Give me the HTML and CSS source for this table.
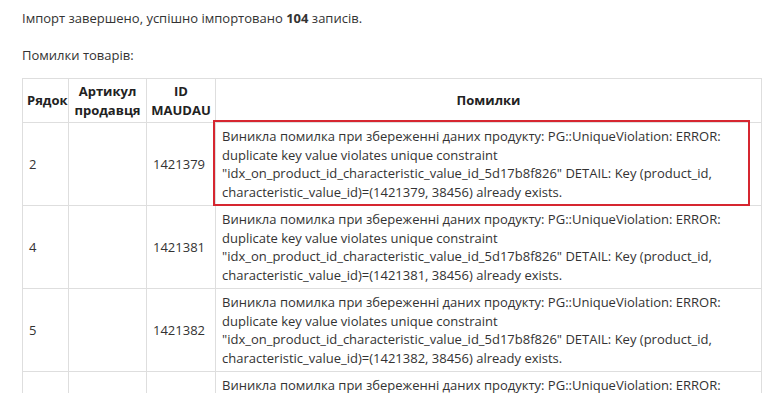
FILE: index.html
```html
<!DOCTYPE html>
<html lang="uk">
<head>
<meta charset="utf-8">
<title>Імпорт</title>
<link rel="stylesheet" href="styles.css">
</head>
<body>
<div class="page">
  <p class="summary">Імпорт завершено, успішно імпортовано <b>104</b> записів.</p>
  <p class="subtitle">Помилки товарів:</p>
  <table class="errors">
    <colgroup>
      <col class="c-row">
      <col class="c-sku">
      <col class="c-id">
      <col class="c-msg">
    </colgroup>
    <thead>
      <tr>
        <th>Рядок</th>
        <th>Артикул продавця</th>
        <th>ID MAUDAU</th>
        <th>Помилки</th>
      </tr>
    </thead>
    <tbody>
      <tr>
        <td>2</td>
        <td></td>
        <td>1421379</td>
        <td class="msg highlighted">Виникла помилка при збереженні даних продукту: PG::UniqueViolation: ERROR: duplicate key value violates unique constraint "idx_on_product_id_characteristic_value_id_5d17b8f826" DETAIL: Key (product_id, characteristic_value_id)=(1421379, 38456) already exists.<span class="mark"></span></td>
      </tr>
      <tr>
        <td>4</td>
        <td></td>
        <td>1421381</td>
        <td class="msg">Виникла помилка при збереженні даних продукту: PG::UniqueViolation: ERROR: duplicate key value violates unique constraint "idx_on_product_id_characteristic_value_id_5d17b8f826" DETAIL: Key (product_id, characteristic_value_id)=(1421381, 38456) already exists.</td>
      </tr>
      <tr>
        <td>5</td>
        <td></td>
        <td>1421382</td>
        <td class="msg">Виникла помилка при збереженні даних продукту: PG::UniqueViolation: ERROR: duplicate key value violates unique constraint "idx_on_product_id_characteristic_value_id_5d17b8f826" DETAIL: Key (product_id, characteristic_value_id)=(1421382, 38456) already exists.</td>
      </tr>
      <tr>
        <td>6</td>
        <td></td>
        <td>1421383</td>
        <td class="msg">Виникла помилка при збереженні даних продукту: PG::UniqueViolation: ERROR: duplicate key value violates unique constraint "idx_on_product_id_characteristic_value_id_5d17b8f826" DETAIL: Key (product_id, characteristic_value_id)=(1421383, 38456) already exists.</td>
      </tr>
    </tbody>
  </table>
</div>
</body>
</html>
```

FILE: styles.css
```css
html, body {
  margin: 0;
  padding: 0;
  background: #ffffff;
}

body {
  font-family: "Open Sans", "Noto Sans", sans-serif;
  font-size: 13px;
  line-height: 18.5px;
  color: #333333;
  overflow: hidden;
}

.page {
  padding: 9px 8px 0 22px;
}

.summary {
  margin: 0 0 18px 0;
}

.subtitle {
  margin: 0 0 14px 0;
}

.summary b {
  font-weight: 700;
}

.errors {
  border-collapse: collapse;
  table-layout: fixed;
  width: 739px;
}

.c-row { width: 46px; }
.c-sku { width: 78px; }
.c-id { width: 69px; }
.c-msg { width: 546px; }

.errors th,
.errors td {
  border: 1px solid #dedede;
  vertical-align: middle;
}

.errors th {
  font-weight: 700;
  text-align: center;
  padding: 3px 4px;
  color: #222222;
}

.errors td {
  text-align: left;
  padding: 4px 6px;
}

.msg.highlighted {
  position: relative;
}

.mark {
  position: absolute;
  left: -3px;
  top: -3px;
  right: 11px;
  bottom: -1px;
  border: 2px solid #d62630;
  pointer-events: none;
}
```
